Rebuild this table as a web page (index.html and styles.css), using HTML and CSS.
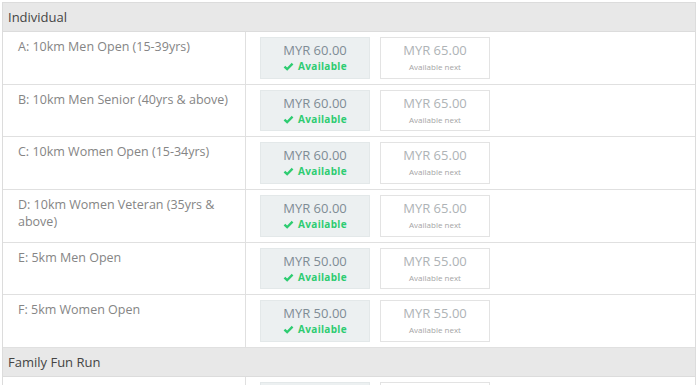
FILE: index.html
```html
<!DOCTYPE html>
<html>
<head>
<meta charset="utf-8">
<link rel="stylesheet" href="styles.css">
</head>
<body>
<div class="tbl">
  <div class="group">Individual</div>

  <div class="row">
    <div class="name">A: 10km Men Open (15-39yrs)</div>
    <div class="prices">
      <div class="box current"><div class="price">MYR 60.00</div><div class="status"><svg class="check" viewBox="0 0 12 10"><polyline points="1.5,5.2 4.5,8 10.5,1.8"/></svg>Available</div></div>
      <div class="box next"><div class="price">MYR 65.00</div><div class="note">Available next</div></div>
    </div>
  </div>

  <div class="row">
    <div class="name">B: 10km Men Senior (40yrs &amp; above)</div>
    <div class="prices">
      <div class="box current"><div class="price">MYR 60.00</div><div class="status"><svg class="check" viewBox="0 0 12 10"><polyline points="1.5,5.2 4.5,8 10.5,1.8"/></svg>Available</div></div>
      <div class="box next"><div class="price">MYR 65.00</div><div class="note">Available next</div></div>
    </div>
  </div>

  <div class="row">
    <div class="name">C: 10km Women Open (15-34yrs)</div>
    <div class="prices">
      <div class="box current"><div class="price">MYR 60.00</div><div class="status"><svg class="check" viewBox="0 0 12 10"><polyline points="1.5,5.2 4.5,8 10.5,1.8"/></svg>Available</div></div>
      <div class="box next"><div class="price">MYR 65.00</div><div class="note">Available next</div></div>
    </div>
  </div>

  <div class="row">
    <div class="name">D: 10km Women Veteran (35yrs &amp; above)</div>
    <div class="prices">
      <div class="box current"><div class="price">MYR 60.00</div><div class="status"><svg class="check" viewBox="0 0 12 10"><polyline points="1.5,5.2 4.5,8 10.5,1.8"/></svg>Available</div></div>
      <div class="box next"><div class="price">MYR 65.00</div><div class="note">Available next</div></div>
    </div>
  </div>

  <div class="row">
    <div class="name">E: 5km Men Open</div>
    <div class="prices">
      <div class="box current"><div class="price">MYR 50.00</div><div class="status"><svg class="check" viewBox="0 0 12 10"><polyline points="1.5,5.2 4.5,8 10.5,1.8"/></svg>Available</div></div>
      <div class="box next"><div class="price">MYR 55.00</div><div class="note">Available next</div></div>
    </div>
  </div>

  <div class="row">
    <div class="name">F: 5km Women Open</div>
    <div class="prices">
      <div class="box current"><div class="price">MYR 50.00</div><div class="status"><svg class="check" viewBox="0 0 12 10"><polyline points="1.5,5.2 4.5,8 10.5,1.8"/></svg>Available</div></div>
      <div class="box next"><div class="price">MYR 55.00</div><div class="note">Available next</div></div>
    </div>
  </div>

  <div class="group">Family Fun Run</div>

  <div class="row">
    <div class="name"></div>
    <div class="prices">
      <div class="box current"></div>
      <div class="box next"></div>
    </div>
  </div>
</div>
</body>
</html>
```

FILE: styles.css
```css
html, body {
  margin: 0;
  padding: 0;
  background: #ffffff;
  overflow: hidden;
}

body {
  font-family: "Open Sans", "DejaVu Sans", sans-serif;
  color: #777;
}

.tbl {
  margin: 2px 0 0 2px;
  width: 694px;
  box-sizing: border-box;
  border: 1px solid #dcdcdc;
  border-bottom: none;
}

.group {
  height: 28px;
  line-height: 28px;
  padding: 0 5px;
  background: #e8e8e8;
  border-bottom: 1px solid #dcdcdc;
  font-size: 13px;
  color: #444;
}

.row {
  display: flex;
  border-bottom: 1px solid #e0e0e0;
}

.name {
  width: 243px;
  flex: none;
  box-sizing: border-box;
  border-right: 1px solid #e0e0e0;
  padding: 6px 14px 0 15px;
  font-size: 12.5px;
  line-height: 17px;
  color: #858585;
}

.prices {
  display: flex;
  gap: 10px;
  padding: 5px 14px 5px 14px;
}

.box {
  width: 110px;
  height: 41.67px;
  box-sizing: border-box;
  text-align: center;
  padding-top: 3px;
}

.current {
  background: #ecf0f1;
  border: 1px solid #e3e8e9;
}

.next {
  background: #fff;
  border: 1px solid #e3e3e3;
}

.price {
  font-size: 13px;
  line-height: 18px;
}

.current .price {
  color: #7f8c95;
}

.next .price {
  color: #aeb3b6;
}

.status {
  font-size: 10px;
  line-height: 15px;
  font-weight: bold;
  color: #2ecc71;
  letter-spacing: 0.3px;
}

.check {
  width: 11px;
  height: 9px;
  margin-right: 4px;
  vertical-align: -1px;
}

.check polyline {
  fill: none;
  stroke: #2ecc71;
  stroke-width: 2.6;
}

.note {
  font-size: 8px;
  line-height: 15px;
  color: #a5a5a5;
}
```
